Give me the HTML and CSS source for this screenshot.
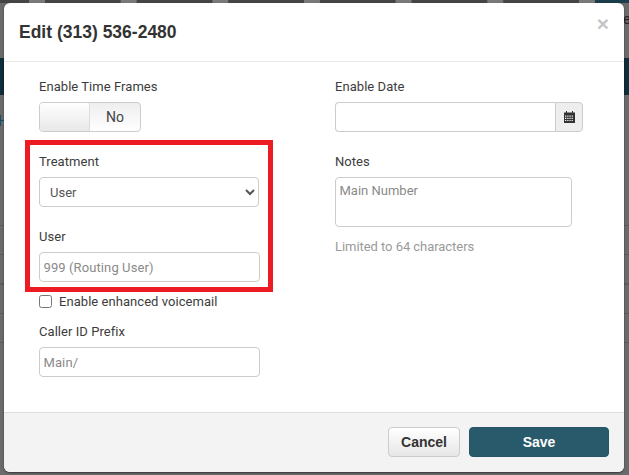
FILE: index.html
```html
<!DOCTYPE html>
<html lang="en">
<head>
<meta charset="utf-8">
<title>Edit (313) 536-2480</title>
<link rel="stylesheet" href="styles.css">
</head>
<body>
<div class="backdrop">
  <div class="tabs"></div>
  <div class="band"></div>
  <div class="row-lines"></div>
  <span class="plus-mark"></span>
  <span class="peek-right">e</span>
</div>
<div class="modal">
  <header class="modal-header">
    <h4 class="modal-title">Edit (313) 536-2480</h4>
    <span class="close">×</span>
  </header>
  <div class="modal-body">
    <div class="col col-left">
      <label class="label">Enable Time Frames</label>
      <div class="toggle"><span class="toggle-handle"></span><span class="toggle-off">No</span></div>
      <div class="highlight">
        <label class="label">Treatment</label>
        <select class="control select"><option>User</option></select>
        <label class="label label-user">User</label>
        <input class="control input" placeholder="999 (Routing User)">
      </div>
      <label class="check"><input type="checkbox" class="checkbox"><span>Enable enhanced voicemail</span></label>
      <label class="label">Caller ID Prefix</label>
      <input class="control input" placeholder="Main/">
    </div>
    <div class="col col-right">
      <label class="label">Enable Date</label>
      <div class="date-group">
        <input class="control date-input">
        <span class="addon">
          <svg width="11" height="12" viewBox="0 0 11 12" aria-hidden="true"><path fill="#333" d="M2 0h1v1.500H8V0h1v1.500h2V12H0V1.500h2z"/><path fill="#eee" d="M1 4.500h1.300v1.200H1zM3.200 4.500h1.300v1.200H3.200zM5.400 4.500h1.300v1.200H5.400zM7.600 4.500h1.300v1.200H7.600zM1 6.700h1.300v1.200H1zM3.200 6.700h1.300v1.200H3.200zM5.400 6.700h1.300v1.200H5.400zM7.600 6.700h1.300v1.200H7.600zM1 8.900h1.300v1.200H1zM3.200 8.900h1.300v1.200H3.200zM5.400 8.900h1.300v1.200H5.400zM7.600 8.900h1.300v1.200H7.600z"/></svg>
        </span>
      </div>
      <label class="label label-notes">Notes</label>
      <textarea class="control textarea" placeholder="Main Number"></textarea>
      <p class="help">Limited to 64 characters</p>
    </div>
  </div>
  <footer class="modal-footer">
    <button class="btn btn-cancel">Cancel</button>
    <button class="btn btn-save">Save</button>
  </footer>
</div>
</body>
</html>
```

FILE: styles.css
```css
* { box-sizing: border-box; }
html, body { margin: 0; height: 100%; }
body {
  width: 629px;
  height: 475px;
  overflow: hidden;
  position: relative;
  background: #6b6b6b;
  font-family: Roboto, "Liberation Sans", sans-serif;
  font-size: 13px;
  color: #333;
}
.backdrop { position: absolute; inset: 0; overflow: hidden; }
.tabs {
  position: absolute; left: 0; top: 0; width: 100%; height: 3px;
  background:
    linear-gradient(90deg, transparent 595px, #1b3d4c 595px) 0 0 / 100% 100% no-repeat,
    linear-gradient(90deg, #7a7a7a 0 16px, #454545 16px) 29px 0 / 91.670px 100% repeat-x;
}
.band { position: absolute; left: 0; top: 58px; width: 100%; height: 37px; background: #0f2d3a; }
.row-lines {
  position: absolute; left: 0; top: 225px; width: 100%; height: 118px;
  background: repeating-linear-gradient(180deg, #5c5c5c 0 1px, transparent 1px 29.250px);
}
.plus-mark {
  position: absolute; left: 0; top: 120px; width: 4px; height: 1px; background: #14506b;
}
.plus-mark::before {
  content: ""; position: absolute; left: 0; top: -5px; width: 1px; height: 11px; background: #14506b;
}
.peek-right { position: absolute; left: 623px; top: 11px; color: #222; font-size: 14px; }

.modal {
  position: absolute; left: 4px; top: 3px; width: 620px; height: 469px;
  background: #fff; border-radius: 6px; overflow: hidden;
  display: flex; flex-direction: column;
  box-shadow: 0 1px 2px rgba(0,0,0,.5);
}
.modal-header {
  height: 59px; flex: none; border-bottom: 1px solid #e9e9e9;
  padding: 19px 15px 0; position: relative;
}
.modal-title { margin: 0; font: bold 17.500px/20px "Liberation Sans", sans-serif; color: #333; }
.close {
  position: absolute; right: 15px; top: 9px;
  font: bold 21px/24px "Liberation Sans", sans-serif; color: #c4c4c4;
}
.modal-body { flex: 1; display: flex; padding: 16px 0 0 35px; }
.col { display: flex; flex-direction: column; align-items: flex-start; }
.col-left { width: 296px; }
.col-right { width: 250px; }
.label { display: block; font-size: 13px; line-height: 18px; height: 18px; margin-bottom: 6px; color: #3c3c3c; letter-spacing: .05px; }
.toggle {
  display: flex; width: 102px; height: 30px; margin-bottom: 8px;
  border: 1px solid #ccc; border-radius: 4px; overflow: hidden;
  background: linear-gradient(#eee, #fff);
}
.toggle-handle { width: 50px; border-right: 1px solid #ddd; background: linear-gradient(#fff, #e8e8e8); }
.toggle-off { flex: 1; text-align: center; font-size: 14px; line-height: 28px; color: #444; }
.highlight {
  width: 248px; height: 152px; margin-left: -14px;
  border: 5px solid #ed1c24; padding: 8px 0 0 9px;
}
.control {
  display: block; height: 30px; border: 1px solid #ccc; border-radius: 4px;
  background: #fff; font: 13px Roboto, "Liberation Sans", sans-serif; color: #555; outline: none; padding: 0 3.500px;
}
.control::placeholder { color: #8a8a8a; opacity: 1; }
.input { width: 221px; letter-spacing: .1px; }
.select { width: 220px; padding: 0 0 0 6px; }
.label-user { margin-top: 21px; }
.check { display: flex; align-items: center; height: 18px; margin-bottom: 13px; color: #3c3c3c; letter-spacing: .05px; }
.checkbox { width: 13px; height: 13px; margin: 0 7px 0 0; }
.date-group { display: flex; width: 248px; height: 30px; margin-bottom: 21px; }
.date-input { flex: 1; min-width: 0; border-radius: 4px 0 0 4px; border-right: 0; }
.addon {
  width: 28px; display: flex; align-items: center; justify-content: center;
  background: #eee; border: 1px solid #ccc; border-radius: 0 4px 4px 0;
}
.label-notes { margin-bottom: 6px; }
.textarea { width: 237px; height: 50px; resize: none; padding: 5px 3.500px; }
.help { margin: 11px 0 0; font-size: 13px; line-height: 18px; letter-spacing: -.05px; color: #9a9a9a; }
.modal-footer {
  height: 60px; flex: none; background: #f3f3f3; border-top: 1px solid #ddd;
  display: flex; justify-content: flex-end; gap: 9px; padding: 14px 15px 0 0;
}
.btn {
  height: 30px; border-radius: 4px; font: bold 14px "Liberation Sans", sans-serif; padding: 0;
}
.btn-cancel { width: 72px; color: #333; border: 1px solid #ccc; background: linear-gradient(#fff, #e6e6e6); }
.btn-save { width: 140px; color: #fff; border: 1px solid #265666; background: #285a6b; }
```
